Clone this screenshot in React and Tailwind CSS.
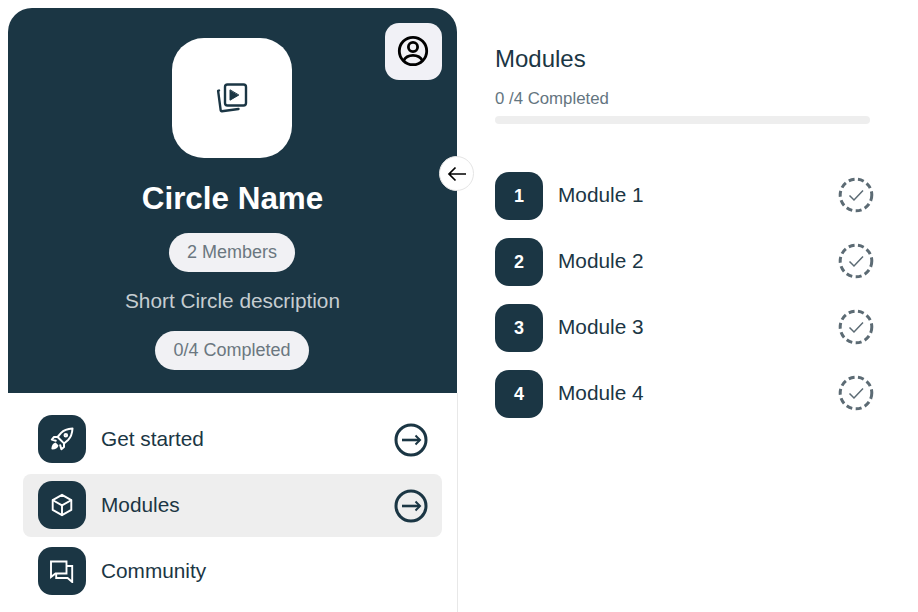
import React from "react";

const PlayStack = () => (
  <svg width="32" height="32" viewBox="0 0 32 32" fill="none" stroke="#1b3644" strokeWidth="2.4" strokeLinejoin="round" strokeLinecap="round">
    <rect x="9" y="2.5" width="21" height="21" rx="2.5" />
    <path d="M14 8.2v10l8.5-5z" fill="#1b3644" strokeWidth="1" />
    <path d="M3 8.5l-.9.4 2.6 19.4c.1.6.6 1 1.2.9l16.6-2.2" />
  </svg>
);

const UserCircle = () => (
  <svg width="32" height="32" viewBox="0 0 32 32" fill="none" stroke="#000" strokeWidth="2.8">
    <circle cx="16" cy="16" r="13.7" />
    <circle cx="16" cy="12" r="4.6" />
    <path d="M6.6 25.6C8.5 21.6 12 20.3 16 20.3s7.5 1.3 9.4 5.3" />
  </svg>
);

const Rocket = () => (
  <svg width="24" height="24" viewBox="0 0 24 24" fill="none" stroke="#fff" strokeWidth="2" strokeLinejoin="round" strokeLinecap="round">
    <path d="M22.5 1.5c-5 .3-8.8 1.6-11.4 4.4L7.6 10l6.4 6.4 4.1-3.5c2.8-2.6 4.1-6.4 4.4-11.4z" />
    <circle cx="15.8" cy="8.2" r="1.3" />
    <path d="M7.6 10H4L1.8 12.6l4 1.2M14 16.4V20l-2.6 2.2-1.2-4" />
    <path d="M5.4 16.6c-1.6.6-2.8 2.4-3 5 2.6-.2 4.4-1.4 5-3z" fill="#fff" />
  </svg>
);

const Cube = () => (
  <svg width="24" height="24" viewBox="0 0 24 24" fill="none" stroke="#fff" strokeWidth="1.9" strokeLinejoin="round" strokeLinecap="round">
    <path d="M12 1.8l9.3 5.3v9.8L12 22.2l-9.3-5.3V7.1z" />
    <path d="M2.9 7.2L12 12.4l9.1-5.2M12 12.4v9.6" />
  </svg>
);

const Chats = () => (
  <svg width="24" height="24" viewBox="0 0 24 24" fill="none" stroke="#fff" strokeWidth="1.9" strokeLinejoin="miter">
    <path d="M1 2.5h15.5v12H5.5L1 18z" />
    <path d="M16.5 7h5.7v16l-4.6-4H6.2v-4.5" />
  </svg>
);

const ArrowCircle = () => (
  <svg width="34" height="34" viewBox="0 0 34 34" fill="none" stroke="#1b3644" strokeWidth="3" className="mt-[2px]">
    <circle cx="17" cy="17" r="15" />
    <path d="M8 17h18" strokeWidth="2.6" />
    <path d="M21.5 12.5L26 17l-4.5 4.5" strokeWidth="2" />
  </svg>
);

const DashedCheck = () => (
  <svg width="36" height="36" viewBox="0 0 36 36" fill="none" stroke="#5c6b74" className="-mt-[2px]">
    <circle cx="18" cy="18" r="15.8" strokeWidth="3" strokeDasharray="6 3.5" />
    <path d="M11.5 18.5l4.5 4.5 9-9.5" strokeWidth="1.5" />
  </svg>
);

const navItems = [
  { label: "Get started", icon: <Rocket />, arrow: true },
  { label: "Modules", icon: <Cube />, arrow: true, active: true },
  { label: "Community", icon: <Chats /> },
];

const modules = [1, 2, 3, 4];

const App = () => {
  return (
    <main className="h-[612px] w-[918px] overflow-hidden bg-white flex font-['Liberation_Sans',Arial,sans-serif] text-[#1b3644]">
      <div className="w-[458px] shrink-0 pl-2 pt-2 flex flex-col">
        <section className="relative h-[385px] w-[449px] bg-[#1b3644] rounded-t-[24px] flex flex-col items-center pt-[30px]">
          <div className="size-[120px] -ml-[1px] rounded-[32px] bg-white flex items-center justify-center">
            <PlayStack />
          </div>
          <h1 className="mt-[23px] text-[31.4px] leading-[36px] font-bold text-white">Circle Name</h1>
          <span className="mt-[16px] h-[39px] px-[17.5px] -ml-[1px] rounded-full bg-[#f1f1f4] text-[#6b7780] text-[18px] flex items-center">2 Members</span>
          <p className="mt-[16px] text-[20.8px] leading-[26px] text-[#c6cdd1]">Short Circle description</p>
          <span className="mt-[17px] h-[39px] px-[18px] -ml-[1px] rounded-full bg-[#f1f1f4] text-[#6b7780] text-[18px] flex items-center">0/4 Completed</span>
          <div className="absolute right-[15px] top-[15px] size-[57px] rounded-[14px] bg-[#f1f1f6] flex items-center justify-center">
            <span className="-ml-[2px] -mt-[2px]"><UserCircle /></span>
          </div>
          <button className="absolute right-[-17px] top-[148px] size-[35px] rounded-full bg-white border border-[#e5e5e5] flex items-center justify-center">
            <svg width="20" height="20" viewBox="0 0 20 20" fill="none" stroke="#000" strokeWidth="1.7">
              <path d="M19 10H2M8.5 3.5L2 10l6.5 6.5" />
            </svg>
          </button>
        </section>
        <nav className="flex-1 border-r border-[#e8e8e8] pl-[15px] pr-[15px] pt-[15px] flex flex-col gap-[3px]">
          {navItems.map((item) => (
            <div
              key={item.label}
              className={`h-[63px] rounded-[8px] pl-[15px] pr-[14px] pb-[2px] flex items-center ${item.active ? "bg-[#eeeeee]" : ""}`}
            >
              <div className="size-[48px] rounded-[14px] bg-[#1b3644] flex items-center justify-center">{item.icon}</div>
              <span className="ml-[15px] flex-1 text-[20.8px]">{item.label}</span>
              {item.arrow && <ArrowCircle />}
            </div>
          ))}
        </nav>
      </div>

      <div className="flex-1 pl-[37px] pt-[43px]">
        <h2 className="text-[24px] leading-[32px]">Modules</h2>
        <p className="mt-[13px] text-[16.8px] leading-[22px] text-[#64757f]">0 /4 Completed</p>
        <div className="mt-[6px] h-[8px] w-[375px] rounded-full bg-[#eeeeee]" />
        <ul className="mt-[48px] w-[379px] flex flex-col gap-[18px]">
          {modules.map((n) => (
            <li key={n} className="h-[48px] flex items-center">
              <div className="size-[48px] rounded-[14px] bg-[#1b3644] text-white font-bold text-[18px] flex items-center justify-center">{n}</div>
              <span className="ml-[15px] -mt-[2px] flex-1 text-[20.8px]">Module {n}</span>
              <DashedCheck />
            </li>
          ))}
        </ul>
      </div>
    </main>
  );
};

export default App;
